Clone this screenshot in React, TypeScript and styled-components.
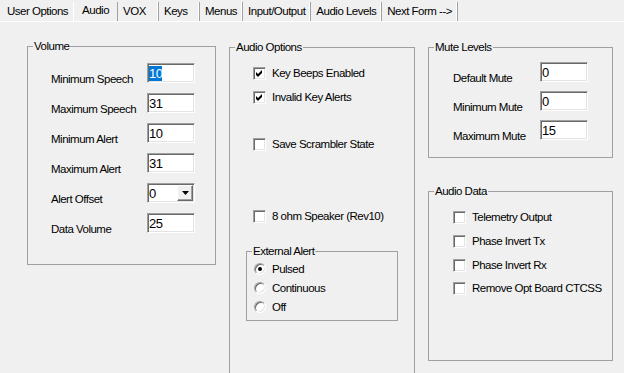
import React from 'react'
import styled, { createGlobalStyle, css } from 'styled-components'

const GlobalStyle = createGlobalStyle`
  html, body {
    margin: 0;
    padding: 0;
  }
  body {
    width: 624px;
    height: 373px;
    overflow: hidden;
    background: #f0f0f0;
    color: #000;
    font-family: "Liberation Sans", Arial, sans-serif;
    font-size: 11.5px;
    letter-spacing: -0.5px;
  }
`

const TABS = ['User Options', 'Audio', 'VOX', 'Keys', 'Menus', 'Input/Output', 'Audio Levels', 'Next Form -->']
const ACTIVE_TAB = 1

const VOLUME = [
  { label: 'Minimum Speech', value: '10', selected: true },
  { label: 'Maximum Speech', value: '31' },
  { label: 'Minimum Alert', value: '10' },
  { label: 'Maximum Alert', value: '31' },
  { label: 'Alert Offset', value: '0', combo: true },
  { label: 'Data Volume', value: '25' },
]

const MUTE = [
  { label: 'Default Mute', value: '0' },
  { label: 'Minimum Mute', value: '0' },
  { label: 'Maximum Mute', value: '15' },
]

const AUDIO_OPTIONS = [
  { label: 'Key Beeps Enabled', checked: true, top: 11 },
  { label: 'Invalid Key Alerts', checked: true, top: 8 },
  { label: 'Save Scrambler State', checked: false, top: 31 },
  { label: '8 ohm Speaker (Rev10)', checked: false, top: 56 },
]

const AUDIO_DATA = [
  { label: 'Telemetry Output', top: 11 },
  { label: 'Phase Invert Tx', top: 8 },
  { label: 'Phase Invert Rx', top: 8 },
  { label: 'Remove Opt Board CTCSS', top: 7 },
]

const ALERTS = ['Pulsed', 'Continuous', 'Off']

type Row = { label: string; value: string; selected?: boolean; combo?: boolean }

const App: React.FC = () => {
  return (
    <>
      <GlobalStyle />
      <TabStrip>
        {TABS.map((t, i) => (
          <Tab key={t} $active={i === ACTIVE_TAB} $plain={i === ACTIVE_TAB - 1}>
            {t}
          </Tab>
        ))}
      </TabStrip>

      <Body>
        <Frame $w={189} $h={226} $raise={1}>
          <Legend>Volume</Legend>
          <FieldGrid $label={96} $gap={10} $top={10} $left={23}>
            {VOLUME.map((r: Row) => (
              <React.Fragment key={r.label}>
                <FieldLabel>{r.label}</FieldLabel>
                <Field>
                  {r.selected ? <Selected>{r.value}</Selected> : <span>{r.value}</span>}
                  {r.combo && (
                    <DropButton>
                      <svg width="7" height="4" viewBox="0 0 7 4">
                        <polygon points="0,0 7,0 3.5,4" fill="#000" />
                      </svg>
                    </DropButton>
                  )}
                </Field>
              </React.Fragment>
            ))}
          </FieldGrid>
        </Frame>

        <Frame $w={186} $h={340}>
          <Legend>Audio Options</Legend>
          <Options $left={23}>
            {AUDIO_OPTIONS.map(o => (
              <CheckRow key={o.label} $top={o.top}>
                <CheckBox checked={o.checked} />
                {o.label}
              </CheckRow>
            ))}
            <SubFrame $w={152} $h={77}>
              <Legend>External Alert</Legend>
              <Options $left={7}>
                {ALERTS.map((a, i) => (
                  <CheckRow key={a} $top={3}>
                    <Radio>{i === 0 && <RadioDot />}</Radio>
                    {a}
                  </CheckRow>
                ))}
              </Options>
            </SubFrame>
          </Options>
        </Frame>

        <RightColumn>
          <Frame $w={185} $h={118}>
            <Legend>Mute Levels</Legend>
            <FieldGrid $label={87} $gap={9} $top={8} $left={24}>
              {MUTE.map(r => (
                <React.Fragment key={r.label}>
                  <FieldLabel>{r.label}</FieldLabel>
                  <Field>
                    <span>{r.value}</span>
                  </Field>
                </React.Fragment>
              ))}
            </FieldGrid>
          </Frame>

          <Frame $w={185} $h={177}>
            <Legend>Audio Data</Legend>
            <Options $left={24}>
              {AUDIO_DATA.map(o => (
                <CheckRow key={o.label} $top={o.top}>
                  <CheckBox checked={false} />
                  {o.label}
                </CheckRow>
              ))}
            </Options>
          </Frame>
        </RightColumn>
      </Body>
    </>
  )
}

const CheckBox: React.FC<{ checked: boolean }> = ({ checked }) => (
  <Box>
    {checked && (
      <svg width="7" height="7" viewBox="0 0 7 7">
        <polygon points="0,2 2,4 6,0 6,3 2,7 0,5" fill="#000" />
      </svg>
    )}
  </Box>
)

const sunken = css`
  background: #fff;
  border: 1px solid;
  border-color: #a0a0a0 #fff #fff #a0a0a0;
  box-shadow: inset 1px 1px 0 #696969, inset -1px -1px 0 #e3e3e3;
`

const TabStrip = styled.div`
  box-sizing: border-box;
  display: flex;
  align-items: flex-end;
  height: 22px;
  border-bottom: 1px solid #fff;
`

const Tab = styled.div<{ $active?: boolean; $plain?: boolean }>`
  box-sizing: border-box;
  height: 19px;
  min-width: 41px;
  padding: 0 5px;
  line-height: 19px;
  white-space: nowrap;
  border-right: 1px solid #a0a0a0;
  box-shadow: inset -1px 0 0 #fff;

  ${p => p.$plain && css`
    padding-left: 7px;
    border-right: none;
    box-shadow: none;
  `}

  ${p => p.$active && css`
    padding: 0 8px;
    line-height: 16px;
    border-left: 1px solid #fff;
    box-shadow: none;
  `}
`

const Body = styled.div`
  display: flex;
  align-items: flex-start;
  gap: 13px;
  padding: 18px 0 0 27px;
`

const Frame = styled.fieldset<{ $w: number; $h: number; $raise?: number }>`
  box-sizing: border-box;
  flex: none;
  width: ${p => p.$w}px;
  height: ${p => p.$h}px;
  min-width: 0;
  margin: ${p => -(p.$raise ?? 0)}px 0 0 0;
  padding: 0;
  border: 1px solid #a0a0a0;
`

const SubFrame = styled(Frame)`
  margin: 20px 0 0 -7px;
`

const Legend = styled.legend`
  margin-left: 5px;
  padding: 0 1px;
  line-height: 14px;
  white-space: nowrap;
`

const RightColumn = styled.div`
  display: flex;
  flex-direction: column;
  gap: 26px;
`

const FieldGrid = styled.div<{ $label: number; $gap: number; $top: number; $left: number }>`
  display: grid;
  grid-template-columns: ${p => p.$label}px 48px;
  row-gap: ${p => p.$gap}px;
  padding: ${p => p.$top}px 0 0 ${p => p.$left}px;
`

const FieldLabel = styled.div`
  align-self: end;
  margin-bottom: -2px;
  line-height: 12px;
  white-space: nowrap;
`

const Field = styled.div`
  ${sunken};
  box-sizing: border-box;
  display: flex;
  align-items: flex-start;
  width: 48px;
  height: 20px;
  padding: 2px 1px 0 1px;
  font-size: 13px;
  line-height: 15px;
  letter-spacing: -0.5px;
`

const Selected = styled.span`
  background: #0078d7;
  color: #fff;
`

const DropButton = styled.div`
  box-sizing: border-box;
  display: flex;
  align-items: center;
  justify-content: center;
  width: 16px;
  height: 16px;
  margin: -1px 0 0 auto;
  background: #f0f0f0;
  border: 1px solid;
  border-color: #fff #696969 #696969 #fff;
  box-shadow: inset -1px -1px 0 #a0a0a0;
`

const Options = styled.div<{ $left: number }>`
  display: flex;
  flex-direction: column;
  padding-left: ${p => p.$left}px;
`

const CheckRow = styled.div<{ $top: number }>`
  display: flex;
  align-items: center;
  gap: 6px;
  height: 16px;
  margin-top: ${p => p.$top}px;
  line-height: 16px;
  white-space: nowrap;
`

const Box = styled.span`
  ${sunken};
  box-sizing: border-box;
  flex: none;
  display: flex;
  align-items: center;
  justify-content: center;
  width: 13px;
  height: 13px;
`

const Radio = styled.span`
  box-sizing: border-box;
  flex: none;
  display: flex;
  align-items: center;
  justify-content: center;
  width: 12px;
  height: 12px;
  border-radius: 50%;
  background: #fff;
  border: 1px solid;
  border-color: #a0a0a0 #fff #fff #a0a0a0;
  box-shadow: inset 1px 1px 0 #696969, inset -1px -1px 0 #e3e3e3;
`

const RadioDot = styled.span`
  width: 4px;
  height: 4px;
  border-radius: 50%;
  background: #000;
`

export default App
